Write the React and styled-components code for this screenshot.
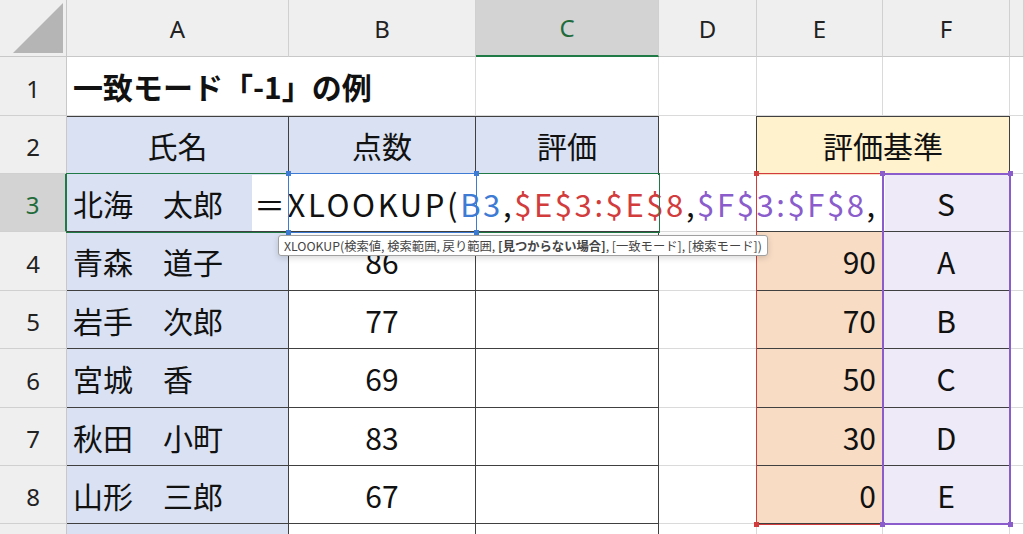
import React from "react";
import styled, { createGlobalStyle } from "styled-components";

const Global = createGlobalStyle`
  html, body { margin: 0; padding: 0; background: #fff; overflow: hidden; }
  body { font-family: "Noto Sans CJK JP", "Noto Sans", sans-serif; }
`;

const Sheet = styled.div`
  position: relative;
  width: 1024px;
  height: 534px;
  overflow: hidden;
  display: grid;
  grid-template-columns: 67px 222px 187px 183px 98px 126px 127px 14px;
  grid-template-rows: 57px 59px 58px 58px 59px 58px 59px 58px 58px 40px;
  background: #fff;
`;

const ColHead = styled.div`
  background: ${p => (p.$sel ? "#d3d3d3" : "#efefef")};
  color: ${p => (p.$sel ? "#1f6b3a" : "#222")};
  border-right: 1px solid #d0d0d0;
  border-bottom: ${p => (p.$sel ? "2px solid #1f7a45" : "1px solid #c8c8c8")};
  display: flex; align-items: center; justify-content: center;
  font-family: "Noto Sans", sans-serif;
  font-size: 24px;
  box-sizing: border-box;
`;

const Corner = styled.div`
  background: #efefef;
  border-right: 1px solid #c8c8c8;
  border-bottom: 1px solid #c8c8c8;
  display: flex; align-items: flex-end; justify-content: flex-end;
  padding: 0 3px 3px 0;
  box-sizing: border-box;
`;

const RowHead = styled.div`
  background: ${p => (p.$sel ? "#d3d3d3" : "#efefef")};
  color: ${p => (p.$sel ? "#1f6b3a" : "#222")};
  border-bottom: 1px solid #d0d0d0;
  border-right: ${p => (p.$sel ? "2px solid #1f7a45" : "1px solid #c8c8c8")};
  display: flex; align-items: center; justify-content: center;
  font-family: "Noto Sans", sans-serif;
  font-size: 24px;
  padding-top: ${p => (p.$cut ? "14px" : "4px")};
  align-items: ${p => (p.$cut ? "flex-start" : "center")};
  overflow: hidden;
  box-sizing: border-box;
`;

const Cell = styled.div`
  background: ${p => p.$bg || "#fff"};
  border-right: 1px solid ${p => p.$br || "#dadada"};
  border-bottom: 1px solid ${p => p.$bb || "#dadada"};
  border-top: ${p => (p.$bt ? `1px solid ${p.$bt}` : "none")};
  display: flex; align-items: center;
  justify-content: ${p => p.$align || "flex-start"};
  padding: 0 6px;
  font-size: 30px;
  font-weight: ${p => (p.$title ? 700 : 400)};
  color: #111;
  white-space: nowrap;
  box-sizing: border-box;
`;

const Editor = styled.div`
  position: absolute;
  left: 252px; top: 175px;
  width: 631px; height: 56px;
  background: #fff;
  display: flex; align-items: center;
  font-size: 31px;
  color: #111;
  padding-left: 2px;
  white-space: nowrap;
  letter-spacing: 2.6px;
  overflow: hidden;
`;

const Ref = styled.span`color: ${p => p.$c};`;

const Frame = styled.div`
  position: absolute;
  left: ${p => p.$x}px; top: ${p => p.$y}px;
  width: ${p => p.$w}px; height: ${p => p.$h}px;
  border: ${p => p.$bw || 1}px solid ${p => p.$c};
  box-sizing: border-box;
  pointer-events: none;
`;

const Handle = styled.div`
  position: absolute;
  width: 5px; height: 5px;
  background: ${p => p.$c};
  left: ${p => p.$x}px; top: ${p => p.$y}px;
`;

const Tip = styled.div`
  position: absolute;
  left: 278px; top: 235px;
  height: 19px;
  padding: 0 5px;
  background: #fff;
  border: 1px solid #a0a0a0;
  border-radius: 3px;
  box-shadow: 0 2px 6px rgba(0,0,0,0.15);
  font-size: 12.3px;
  color: #444;
  display: flex; align-items: center;
  white-space: nowrap;
`;

const BLUE = "#d9e1f2";
const DARK = "#404040";
const ORANGE = "#f8dcc4";
const LILAC = "#eeeaf7";

const names = [["北海　太郎", ""], ["青森　道子", "86"], ["岩手　次郎", "77"], ["宮城　香", "69"], ["秋田　小町", "83"], ["山形　三郎", "67"]];
const crit = [["100", "S"], ["90", "A"], ["70", "B"], ["50", "C"], ["30", "D"], ["0", "E"]];

export default function App() {
  const cols = ["A", "B", "C", "D", "E", "F", ""];
  return (
    <>
      <Global />
      <Sheet>
        <Corner>
          <svg width="50" height="50"><polygon points="50,0 50,50 0,50" fill="#b5b5b5" /></svg>
        </Corner>
        {cols.map((c, i) => <ColHead key={i} $sel={c === "C"}>{c}</ColHead>)}

        <RowHead>1</RowHead>
        <Cell $title style={{ gridColumn: "span 2" }}>一致モード「-1」の例</Cell>
        <Cell /><Cell /><Cell /><Cell /><Cell />

        <RowHead>2</RowHead>
        <Cell $bg={BLUE} $align="center" $br={DARK} $bb={DARK} $bt={DARK}>氏名</Cell>
        <Cell $bg={BLUE} $align="center" $br={DARK} $bb={DARK} $bt={DARK}>点数</Cell>
        <Cell $bg={BLUE} $align="center" $br={DARK} $bb={DARK} $bt={DARK}>評価</Cell>
        <Cell $br={DARK} />
        <Cell $bg="#fff2cc" $align="center" $br={DARK} $bb={DARK} $bt={DARK} style={{ gridColumn: "span 2" }}>評価基準</Cell>
        <Cell />

        {names.map((n, i) => (
          <React.Fragment key={i}>
            <RowHead $sel={i === 0}>{i + 3}</RowHead>
            <Cell $bg={BLUE} $br={DARK} $bb={DARK}>{n[0]}</Cell>
            <Cell $align="center" $br={DARK} $bb={DARK}>{n[1]}</Cell>
            <Cell $br={DARK} $bb={DARK} />
            <Cell $br={DARK} />
            <Cell $bg={ORANGE} $align="flex-end" $br={DARK} $bb={DARK}>{crit[i][0]}</Cell>
            <Cell $bg={LILAC} $align="center" $br={DARK} $bb={DARK}>{crit[i][1]}</Cell>
            <Cell />
          </React.Fragment>
        ))}

        <RowHead $cut>9</RowHead>
        <Cell $bg={BLUE} $br={DARK} /><Cell $br={DARK} /><Cell $br={DARK} /><Cell /><Cell /><Cell /><Cell />

        <Editor>
          ＝XLOOKUP(<Ref $c="#3d7bd4">B3</Ref>,<Ref $c="#d23c3c">$E$3:$E$8</Ref>,<Ref $c="#8a5ccc">$F$3:$F$8</Ref>,
        </Editor>

        <Frame $x={66} $y={173} $w={594} $h={60} $c="#1f7a45" />
        <Frame $x={288} $y={173} $w={189} $h={60} $c="#3d7bd4" />
        <Handle $c="#3d7bd4" $x={286} $y={171} /><Handle $c="#3d7bd4" $x={474} $y={171} />
        <Handle $c="#3d7bd4" $x={286} $y={230} /><Handle $c="#3d7bd4" $x={474} $y={230} />
        <Frame $x={756} $y={173} $w={128} $h={352} $c="#d23c3c" />
        <Handle $c="#d23c3c" $x={754} $y={171} /><Handle $c="#d23c3c" $x={754} $y={522} />
        <Frame $x={882} $y={173} $w={129} $h={352} $bw={2} $c="#8a5ccc" />
        <Handle $c="#8a5ccc" $x={880} $y={171} /><Handle $c="#8a5ccc" $x={1008} $y={171} />
        <Handle $c="#8a5ccc" $x={880} $y={522} /><Handle $c="#8a5ccc" $x={1008} $y={522} />

        <Tip>XLOOKUP(検索値, 検索範囲, 戻り範囲, <b>&nbsp;[見つからない場合]</b>, [一致モード], [検索モード])</Tip>
      </Sheet>
    </>
  );
}
